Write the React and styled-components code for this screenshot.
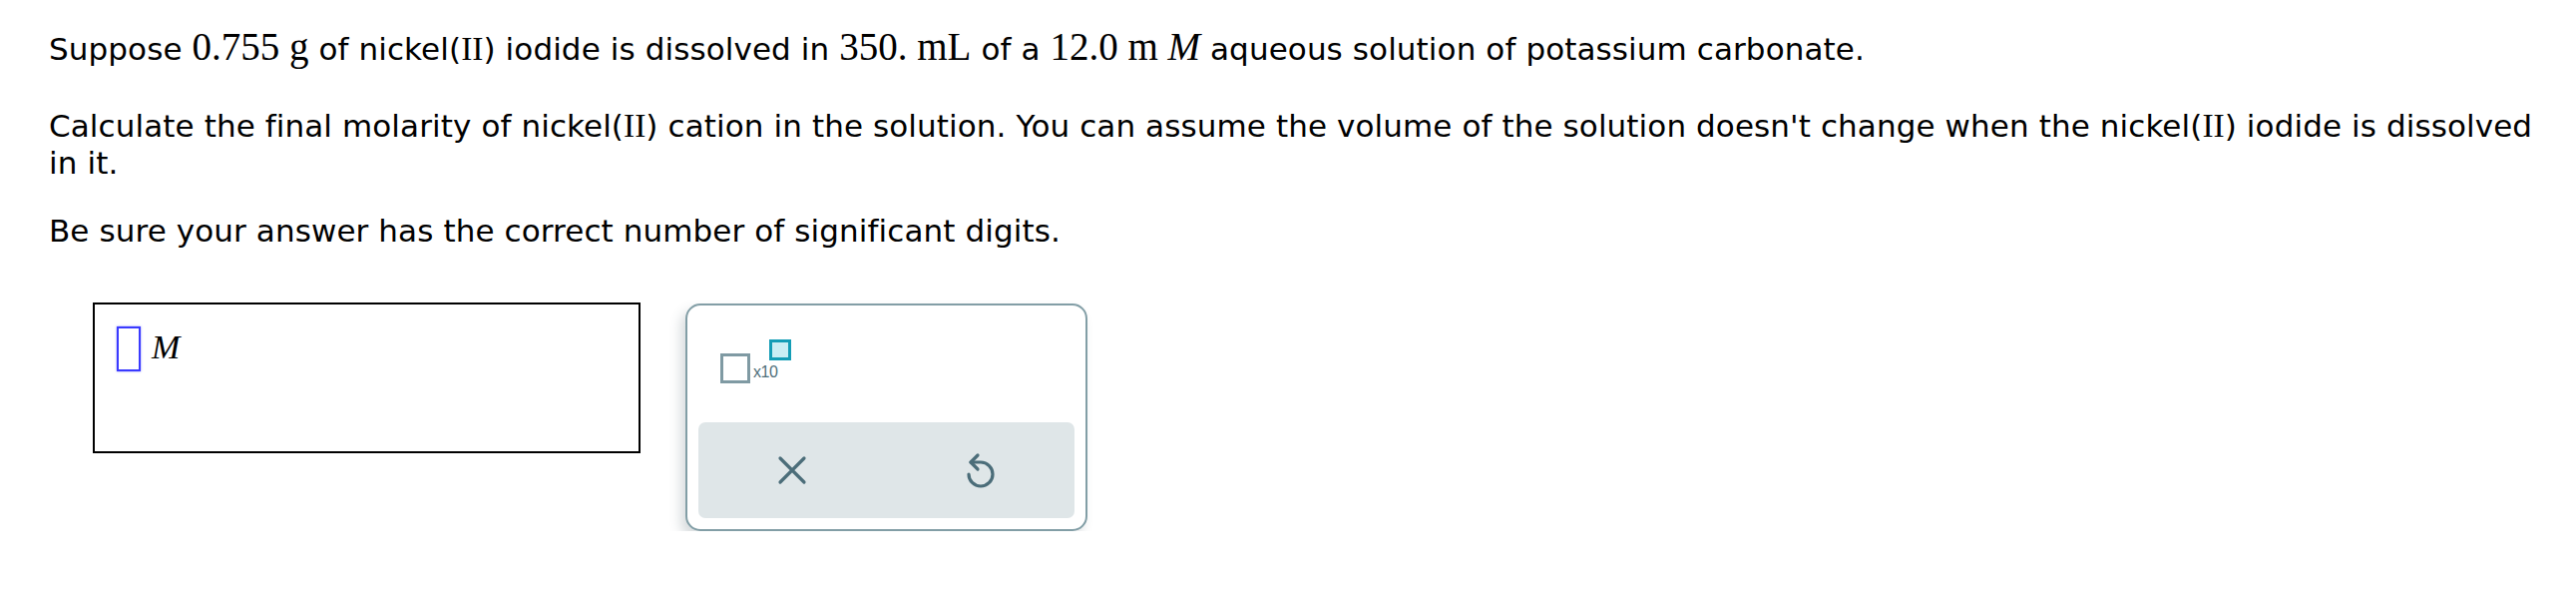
import React from 'react';
import styled, { createGlobalStyle } from 'styled-components';

const GlobalStyle = createGlobalStyle`
  html, body {
    margin: 0;
    padding: 0;
    background: #fff;
  }
  body {
    font-family: "DejaVu Sans", Verdana, sans-serif;
    color: #000;
  }
`;

const Page = styled.div`
  padding: 28px 20px 0 49px;
  width: 2582px;
  box-sizing: border-box;
`;

const Paragraph = styled.p`
  margin: 0 0 ${({ gap }) => gap ?? 31}px;
  font-size: 31px;
  line-height: 37px;
  letter-spacing: 0.1px;
`;

const MathText = styled.span`
  font-family: "Liberation Serif", "Times New Roman", serif;
  font-size: 39px;
  line-height: 37px;
  letter-spacing: 0;
  font-style: ${({ italic }) => (italic ? 'italic' : 'normal')};
`;

const Roman = styled.span`
  font-family: "Liberation Serif", "Times New Roman", serif;
  font-size: 1.08em;
  letter-spacing: 0;
`;

const AnswerRow = styled.div`
  display: flex;
  align-items: flex-start;
  gap: 45px;
  padding-left: 44px;
  margin-top: 53px;
`;

const AnswerBox = styled.div`
  width: 549px;
  height: 151px;
  box-sizing: border-box;
  border: 2px solid #000;
  padding: 22px 0 0 22px;
  display: flex;
  align-items: flex-start;
  gap: 11px;
`;

const Placeholder = styled.div`
  width: 24px;
  height: 45px;
  box-sizing: border-box;
  border: 2px solid #3a3aff;
  box-shadow: 0 0 2px rgba(58, 58, 255, 0.6);
`;

const UnitLabel = styled.span`
  font-family: "Liberation Serif", "Times New Roman", serif;
  font-style: italic;
  font-size: 34px;
  line-height: 33px;
  margin-top: 4px;
`;

const Panel = styled.div`
  width: 403px;
  height: 228px;
  margin-top: 1px;
  box-sizing: border-box;
  border: 2px solid #829ea6;
  border-radius: 15px;
  background: #fff;
  box-shadow: -5px 7px 12px rgba(60, 80, 90, 0.2);
  padding: 0 11px 11px;
  display: flex;
  flex-direction: column;
`;

const TopArea = styled.div`
  height: 117px;
  box-sizing: border-box;
  padding: 34px 0 0 22px;
`;

const ExpButton = styled.div`
  display: inline-flex;
  align-items: flex-start;
`;

const BaseBox = styled.div`
  width: 30px;
  height: 30px;
  margin-top: 14px;
  box-sizing: border-box;
  border: 3px solid #7f9aa3;
`;

const ExpText = styled.span`
  font-family: "Liberation Sans", Arial, sans-serif;
  font-size: 16px;
  line-height: 16px;
  color: #4f6f7a;
  margin: 25px 0 0 3px;
  letter-spacing: -0.5px;
`;

const ExpBox = styled.div`
  width: 22px;
  height: 21px;
  margin-left: -8px;
  box-sizing: border-box;
  border: 3px solid #139db6;
  background: #c9eef4;
`;

const ActionBar = styled.div`
  flex: 1;
  display: grid;
  grid-template-columns: 1fr 1fr;
  background: #dfe6e8;
  border-radius: 7px;
`;

const ActionButton = styled.button`
  border: none;
  background: none;
  padding: 0;
  display: flex;
  align-items: center;
  justify-content: center;
  cursor: pointer;
`;

const ClearIcon = () => (
  <svg width="30" height="30" viewBox="0 0 30 30" fill="none" stroke="#4b6d79" strokeWidth="3.2" strokeLinecap="round">
    <path d="M3 3 L27 27 M27 3 L3 27" />
  </svg>
);

const UndoIcon = () => (
  <svg width="36" height="40" viewBox="0 0 36 40" fill="none" stroke="#4b6d79" strokeWidth="3.2" strokeLinecap="round" strokeLinejoin="round">
    <path d="M6 24 A12 12 0 1 0 18 12 L8 12" />
    <path d="M15 5 L8 12 L15 19" />
  </svg>
);

export default function App() {
  return (
    <>
      <GlobalStyle />
      <Page>
        <Paragraph gap={39}>
          Suppose <MathText>0.755 g</MathText> of nickel(<Roman>II</Roman>) iodide is dissolved in{' '}
          <MathText>350. mL</MathText> of a <MathText>12.0 m <MathText italic>M</MathText></MathText> aqueous
          solution of potassium carbonate.
        </Paragraph>
        <Paragraph>
          Calculate the final molarity of nickel(<Roman>II</Roman>) cation in the solution. You can assume the
          volume of the solution doesn't change when the nickel(<Roman>II</Roman>) iodide is dissolved in it.
        </Paragraph>
        <Paragraph gap={0}>Be sure your answer has the correct number of significant digits.</Paragraph>
        <AnswerRow>
          <AnswerBox>
            <Placeholder />
            <UnitLabel>M</UnitLabel>
          </AnswerBox>
          <Panel>
            <TopArea>
              <ExpButton>
                <BaseBox />
                <ExpText>x10</ExpText>
                <ExpBox />
              </ExpButton>
            </TopArea>
            <ActionBar>
              <ActionButton aria-label="Clear">
                <ClearIcon />
              </ActionButton>
              <ActionButton aria-label="Undo">
                <UndoIcon />
              </ActionButton>
            </ActionBar>
          </Panel>
        </AnswerRow>
      </Page>
    </>
  );
}
